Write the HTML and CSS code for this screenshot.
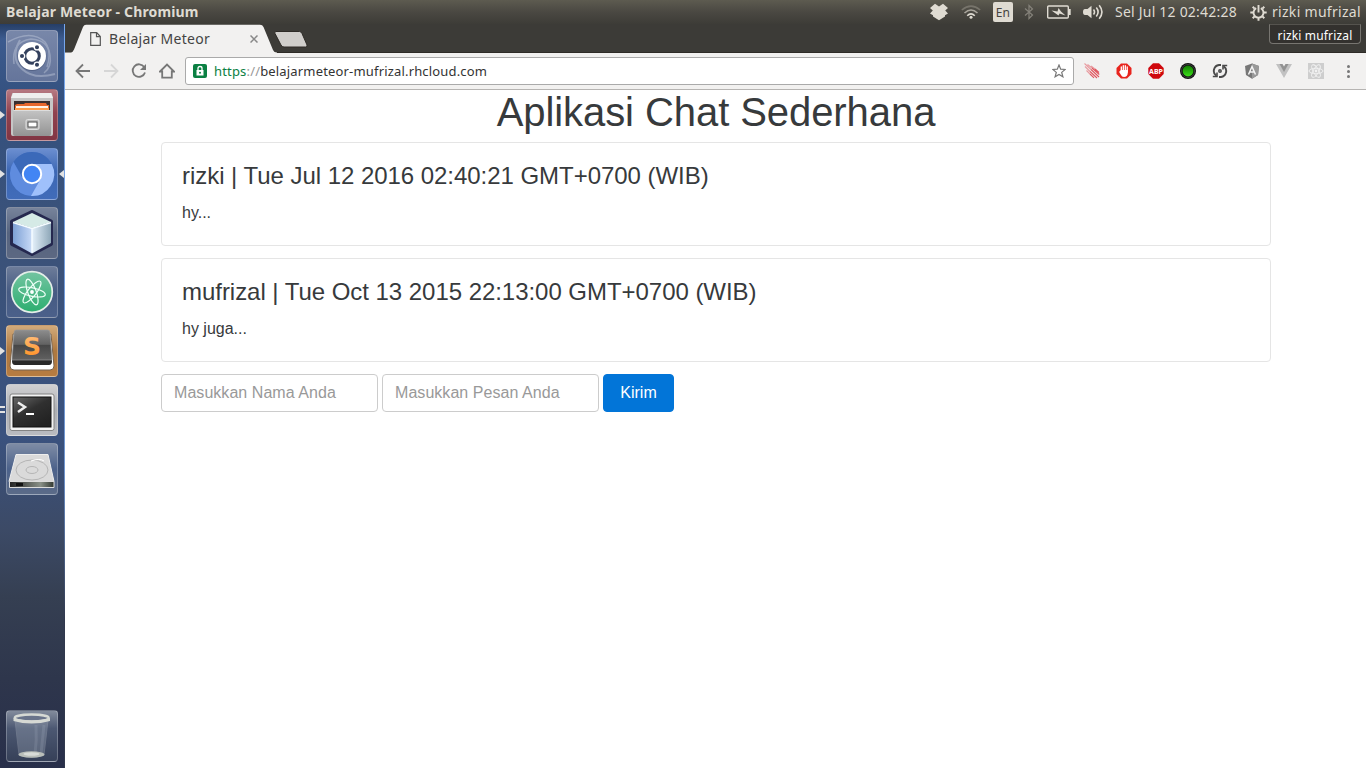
FILE: index.html
```html
<!DOCTYPE html>
<html lang="id">
<head>
<meta charset="utf-8">
<title>Belajar Meteor</title>
<link rel="stylesheet" href="styles.css">
</head>
<body>
<header class="panel">
  <span class="panel-title">Belajar Meteor - Chromium</span>
  <div class="indicators">
    <svg class="ind-dropbox" width="18" height="18" viewBox="0 0 18 18" fill="#dfdbd2"><path d="M5 .8 9 3.500 13 .8 18 5 15.200 7.500 18 10.500 15 12.300V13.600L9 17.200 3 13.600V12.300L0 10.500 2.800 7.500 0 5z"/></svg>
    <svg class="ind-wifi" width="20" height="16" viewBox="0 0 20 16" fill="none" stroke-width="1.5"><path d="M.8 6Q10-1.800 19.200 6" stroke="#77746b"/><path d="M3.500 9Q10 3 16.500 9" stroke="#aaa69d"/><path d="M6.2 11.700Q10 8 13.800 11.700" stroke="#dfdbd2"/><circle cx="10" cy="13.300" r="1.500" fill="#dfdbd2"/></svg>
    <span class="ind-lang">En</span>
    <svg class="ind-bt" width="10" height="16" viewBox="0 0 10 16" fill="none" stroke="#85827a" stroke-width="1.200"><path d="M1 4.500 8.500 11 5 14.500V1.500L8.500 5 1 11.500"/></svg>
    <svg class="ind-battery" width="24" height="14" viewBox="0 0 24 14"><path d="M1.700 1h18.600q1 0 1 1v10q0 1-1 1H1.700q-1 0-1-1V2q0-1 1-1z" fill="none" stroke="#dfdbd2" stroke-width="1.400"/><path d="M22 4h1.700v6H22z" fill="#dfdbd2"/><path d="M4.500 5.500 10.500 6.500 11.500 3 14 6.500 18.500 10.500 12.500 8.500 11.500 10.500z" fill="#dfdbd2"/></svg>
    <svg class="ind-sound" width="21" height="16" viewBox="0 0 21 16" fill="none" stroke="#dfdbd2" stroke-width="1.600"><path d="M0 8q0-3 2-3h2.500L8.500 1.800v12.400L4.500 11H2Q0 11 0 8z" fill="#dfdbd2" stroke="none"/><path d="M10.500 5.500q2 2.500 0 5M13.300 3.500q3.600 4.500 0 9M16.200 1.200q5.500 6.800 0 13.600"/></svg>
    <span class="clock">Sel Jul 12 02:42:28</span>
    <svg class="ind-gear" width="17" height="17" viewBox="0 0 17 17" fill="none" stroke="#dfdbd2"><path d="M8.500 14v2.700M.3 8.500H3M14 8.500h2.700M2.700 2.700 4.600 4.600M12.400 12.400l1.900 1.900M2.700 14.300l1.900-1.900M12.400 4.600l1.900-1.900" stroke-width="2"/><path d="M6.200 4.200a5 5 0 1 0 4.600 0" stroke-width="1.900"/><path d="M8.500 1v7.500" stroke-width="1.900"/></svg>
    <span class="user">rizki mufrizal</span>
  </div>
</header>

<div class="desktop">
  <nav class="launcher">
    <div class="tile dash"><svg viewBox="0 0 52 52"><g fill="none" stroke="#d8dfec" opacity=".35"><path d="M8 34Q5 12 25 9 42 10 44 25 46 37 38 43" stroke-width="1.500"/><path d="M2 12Q25-1 39 12 46 22 41 37" stroke-width="1.500"/><path d="M14 10Q4 28 16 39 28 50 49 44" stroke-width="2"/></g><circle cx="26" cy="26.500" r="14.500" fill="#2c3a5c" opacity=".35"/><circle cx="26" cy="26" r="14" fill="#fff"/><circle cx="26" cy="26" r="7.300" fill="none" stroke="#33405d" stroke-width="3"/><g stroke="#fff" stroke-width="1.300" fill="#33405d"><circle cx="16" cy="26" r="2.700"/><circle cx="31" cy="17.200" r="2.700"/><circle cx="31" cy="34.800" r="2.700"/></g></svg></div>
    <div class="tile files"><i class="arrow-left"></i><svg viewBox="0 0 52 52"><defs><linearGradient id="cab" x2="0" y2="1"><stop stop-color="#c4c4c4"/><stop offset="1" stop-color="#939393"/></linearGradient></defs><path d="M5 9 6 5q0-1 1-1h38q1 0 1 1l1 4v36q0 2-2 2H7q-2 0-2-2z" fill="#c6c6c6"/><path d="M7 4h38l2 5H5z" fill="#efefef"/><path d="M8 12h36v12H8z" fill="#3a3030"/><path d="M9 21v-5l2-1h7l1-1h21l1 2h2v5z" fill="#e7672d"/><path d="M10 17h32v2H10z" fill="#fff3e8"/><path d="M9 19h34v3H9z" fill="#ff9d4c"/><path d="M7 21h38v24q0 2-2 2H9q-2 0-2-2z" fill="url(#cab)"/><path d="M7.500 21.500h37" stroke="#ddd"/><rect x="20" y="30.500" width="13" height="10" rx="1.500" fill="#bbb" stroke="#e0e0e0"/><rect x="22" y="33" width="9" height="5" fill="#fff" stroke="#505050"/></svg></div>
    <div class="tile chromium"><i class="arrow-left"></i><i class="arrow-right"></i><svg viewBox="0 0 52 52"><circle cx="26" cy="26" r="22" fill="#4373cc"/><path d="M7.500 14A22 22 0 0 1 44.500 14L46 16.500H26L16.500 29z" fill="#3b69b9"/><path d="M7.500 14A22 22 0 0 0 26 48L34 31H17z" fill="#5f8cdf"/><path d="M26 16h19.700A22 22 0 0 1 25 48L34.500 31Z" fill="#9fc0fb"/><circle cx="26" cy="26" r="9.200" fill="#4285f4" stroke="#fff" stroke-width="2"/></svg></div>
    <div class="tile netbeans"><svg viewBox="0 0 52 52"><defs><linearGradient id="cl"><stop stop-color="#7da0d5"/><stop offset="1" stop-color="#c8daf6"/></linearGradient><linearGradient id="cr"><stop stop-color="#e5f1fb"/><stop offset="1" stop-color="#8ea7b8"/></linearGradient></defs><path d="M26 5 45 14.500V37L26 47 6 37V14.500z" fill="#243057" stroke="#25284f" stroke-width="4" stroke-linejoin="round"/><path d="M26 6 45 15 26 21 7 15z" fill="#d5eae6"/><path d="M7 15.500 26 21V46.500L7 36z" fill="url(#cl)"/><path d="M26 21 45 15.500V36L26 46.500z" fill="url(#cr)"/><path d="M7 15.500l19 6 19-6M26 21v24.500" fill="none" stroke="#f5fcff" stroke-width="1.500"/></svg></div>
    <div class="tile atom"><svg viewBox="0 0 52 52"><defs><linearGradient id="at" x2="0" y2="1"><stop stop-color="#73c4a1"/><stop offset="1" stop-color="#2dae70"/></linearGradient></defs><circle cx="26" cy="26" r="20.300" fill="url(#at)" stroke="#e4eee9" stroke-width="1.700"/><g fill="none" stroke="#eefff7" stroke-width="1.200"><ellipse cx="26" cy="26" rx="13.500" ry="4.200" transform="rotate(12 26 26)"/><ellipse cx="26" cy="26" rx="13.500" ry="4.200" transform="rotate(70 26 26)"/><ellipse cx="26" cy="26" rx="13.500" ry="4.200" transform="rotate(128 26 26)"/></g><circle cx="26" cy="26" r="1.900" fill="#fff"/></svg></div>
    <div class="tile sublime"><i class="arrow-left"></i><svg viewBox="0 0 52 52"><defs><linearGradient id="sub" x2="0" y2="1"><stop stop-color="#8d8d8d"/><stop offset=".48" stop-color="#626262"/><stop offset=".5" stop-color="#464646"/><stop offset="1" stop-color="#616161"/></linearGradient><linearGradient id="letter" x2="0" y2="1"><stop stop-color="#ffc384"/><stop offset="1" stop-color="#ff8a18"/></linearGradient></defs><path d="M7 9 4 41q0 4 4 4h36q4 0 4-4L45 9z" fill="#fff" stroke="#77634e"/><path d="M8 8 6 36q0 4 3 4h34q3 0 3-4L44 8z" fill="#292929"/><path d="M10 5h32q2 0 2 3l2 27H6L8 8q0-3 2-3z" fill="url(#sub)" stroke="#999" stroke-width=".7"/><text x="26" y="30" text-anchor="middle" class="sublime-letter" fill="url(#letter)">S</text></svg></div>
    <div class="tile terminal"><i class="double-mark"></i><svg viewBox="0 0 52 52"><defs><linearGradient id="term" x2=".7" y2="1"><stop stop-color="#686868"/><stop offset=".5" stop-color="#303030"/><stop offset="1" stop-color="#222"/></linearGradient></defs><rect x="4" y="10" width="44" height="36.500" rx="2" fill="#f3f3f3" stroke="#838383"/><rect x="7" y="13" width="38" height="30" fill="url(#term)" stroke="#111"/><path d="M12 18.500 19 23 12 28" fill="none" stroke="#eee" stroke-width="2.500"/><path d="M20 30h8" stroke="#fff" stroke-width="2"/></svg></div>
    <div class="tile disk"><svg viewBox="0 0 52 52"><defs><linearGradient id="edge"><stop stop-color="#222"/><stop offset=".7" stop-color="#899087"/><stop offset="1" stop-color="#303730"/></linearGradient></defs><path d="M10 11.500h32l6 27H3z" fill="#dadada" stroke="#eee"/><path d="M3.500 38.500h44.500v6H3.500z" fill="url(#edge)" stroke="#ddd"/><g fill="none" stroke="#b5b5b5"><ellipse cx="26" cy="27" rx="16" ry="10"/><ellipse cx="26" cy="27" rx="6" ry="3.500"/></g><path d="M25 18Q34 15 38 18" fill="none" stroke="#fff"/><path d="M10 40h7v3h-7z" fill="#111"/></svg></div>
    <div class="tile trash"><svg viewBox="0 0 52 52"><path d="M9 10 13 45q12 5 25 0l4-35z" fill="#aeb8c5" opacity=".28" stroke="#c6ccd4"/><path d="M30 15q1 15-1 29M38 15l-3 29" stroke="#c8d0da" opacity=".14" stroke-width="3" fill="none"/><ellipse cx="25.500" cy="44.500" rx="13" ry="3.200" fill="#b9beb9"/><ellipse cx="25.500" cy="44" rx="8" ry="1.800" fill="#d9dcd8"/><ellipse cx="25.700" cy="8" rx="17" ry="3.500" fill="#69738a" stroke="#d6d9d4" stroke-width="2.300"/><path d="M7.500 8v3q18 5 36.500 0V8q-18 5-36.500 0z" fill="#d6d9d4"/></svg></div>
  </nav>

  <section class="browser">
    <div class="tab-strip">
      <svg class="tab-shape" width="250" height="30" viewBox="0 0 250 30"><path d="M0 28.500H6Q8 28 9 25.500L18 3Q19 .8 21 .8H195Q197.500 .8 198.500 3L208 26Q209 28.500 212 28.500V30H0z" fill="#f2f1f0"/><path d="M211 7.500H234.500Q236 7.500 237 9.500L242 21Q242.600 23 240.500 23H219Q217 23 216 21L210 9.500Q209 7.500 211 7.500z" fill="#d0cecb" stroke="#2e2b27"/></svg>
      <div class="tab"><svg width="11" height="14" viewBox="0 0 11 14"><path d="M.7.700h6L10.300 4.500v8.800H.7zM6.500.700v4h3.800" fill="none" stroke="#555" stroke-width="1.200"/></svg><span class="tab-name">Belajar Meteor</span><svg class="tab-close" width="8" height="8" viewBox="0 0 8 8"><path d="M.5.500 7.500 7.500M7.500.500.500 7.500" stroke="#888" stroke-width="1.500"/></svg></div>
      <span class="profile">rizki mufrizal</span>
    </div>
    <div class="toolbar">
      <div class="nav-icons">
        <svg viewBox="0 0 16 16"><path d="M15 8H2M8 1.500 1.500 8 8 14.500" stroke="#777" stroke-width="1.800" fill="none"/></svg>
        <svg viewBox="0 0 16 16"><path d="M1 8h13M8 1.500 14.500 8 8 14.500" stroke="#d6d6d6" stroke-width="1.800" fill="none"/></svg>
        <svg viewBox="0 0 16 16"><path d="M13.200 4A6.300 6.300 0 1 0 14 9.500" stroke="#777" stroke-width="1.800" fill="none"/><path d="M15 1v6H9z" fill="#777"/></svg>
        <svg viewBox="0 0 16 16"><path d="M1 8.500 8 1.500 15 8.500H12.800V14.700H3.200V8.500z" stroke="#777" stroke-width="1.800" fill="none"/></svg>
      </div>
      <div class="address">
        <svg class="lock" width="14" height="14" viewBox="0 0 14 14"><rect width="14" height="14" rx="2" fill="#0b8043"/><path d="M3.500 6h7v5.500h-7z" fill="#fff"/><path d="M5 6V4.200q0-1.700 2-1.700t2 1.700V6" fill="none" stroke="#fff" stroke-width="1.300"/><circle cx="7" cy="8.700" r="1" fill="#0b8043"/></svg>
        <span class="url"><span class="scheme">https</span><span class="slashes">://</span>belajarmeteor-mufrizal.rhcloud.com</span>
        <svg class="star" width="14" height="14" viewBox="0 0 14 14"><path d="M7 1 8.700 5.200 13.200 5.500 9.700 8.400 10.900 12.800 7 10.400 3.100 12.800 4.300 8.400.8 5.500 5.300 5.200z" fill="none" stroke="#777" stroke-width="1.200"/></svg>
      </div>
      <div class="extensions">
        <svg viewBox="0 0 16 16" fill="none" stroke="#e0565e" stroke-width="1.100"><path d="M.5.500 7 6.500M3.500 1.500 8 5M1 3.500 6 8.500M7 3l4 3M2.500 7.500 6 11" opacity=".55"/><path d="M7 6.500 15 14M8 5 15.300 11.500M6 8.500 13 15M11 6l4 3.500M6 11l4 3.800"/></svg>
        <svg viewBox="0 0 16 16"><path d="M5 .500h6L15.500 5v6L11 15.500H5L.5 11V5z" fill="#e8241d"/><path d="M5.300 9V4M7.300 8V2.700M9.300 8V2.700M11.200 9V4" stroke="#fff" stroke-width="1.300" stroke-linecap="round"/><path d="M4.700 7h7.100v3q-.3 4-3.800 4-2.200 0-3.300-2.500L3 8.800 4.200 8z" fill="#fff"/></svg>
        <svg viewBox="0 0 16 16"><path d="M5 .300h6L15.700 5v6L11 15.700H5L.3 11V5z" fill="#cf080d"/><text x="8" y="10.600" class="abp">ABP</text></svg>
        <svg viewBox="0 0 16 16"><defs><linearGradient id="gr" x2="0" y2="1"><stop stop-color="#147e03"/><stop offset="1" stop-color="#3bdf18"/></linearGradient></defs><circle cx="8" cy="8" r="8" fill="#111"/><circle cx="8" cy="8" r="6.600" fill="none" stroke="#555" stroke-width=".6"/><circle cx="8" cy="8" r="5.400" fill="url(#gr)"/></svg>
        <svg viewBox="0 0 16 16" fill="none" stroke="#4a4a4a" stroke-width="1.900"><path d="M9 2H7A6 6 0 0 0 4.300 12.800M7 14h2A6 6 0 0 0 11.700 3.200"/><path d="M.8 13.500H5V9.500M15.200 2.500H11V6.500" stroke-width="1.600"/><circle cx="8" cy="8" r="1.200" stroke-width="1.500"/></svg>
        <svg viewBox="0 0 16 16"><path d="M8 .500 15 3 14 12 8 15.700 2 12 1 3z" fill="#777"/><path d="M8 .500 15 3 14 12 8 15.700z" fill="#999"/><path d="M4.500 11.500 8 3.500 11.500 11.500M6 9h4" fill="none" stroke="#f4f4f4" stroke-width="1.500"/></svg>
        <svg viewBox="0 0 16 16"><path d="M0 1h4l4 7 4-7h4L8 15z" fill="#c2c2c2"/><path d="M3.500 1h3L8 3.500 9.500 1h3L8 9z" fill="#929292"/></svg>
        <svg viewBox="0 0 16 16"><path d="M0 0h16v16H0z" fill="#cecece"/><g fill="none" stroke="#f2f2f2" stroke-width=".9"><ellipse cx="8" cy="8" rx="7" ry="2.700"/><ellipse cx="8" cy="8" rx="7" ry="2.700" transform="rotate(60 8 8)"/><ellipse cx="8" cy="8" rx="7" ry="2.700" transform="rotate(120 8 8)"/></g><circle cx="8" cy="8" r="1.400" fill="#f2f2f2"/></svg>
        <svg viewBox="0 0 16 16" fill="#777"><circle cx="8.500" cy="3.500" r="1.500"/><circle cx="8.500" cy="8.500" r="1.500"/><circle cx="8.500" cy="13.500" r="1.500"/></svg>
      </div>
    </div>
    <main class="page">
      <div class="container">
        <h1>Aplikasi Chat Sederhana</h1>
        <article class="card"><h4>rizki | Tue Jul 12 2016 02:40:21 GMT+0700 (WIB)</h4><p>hy...</p></article>
        <article class="card"><h4>mufrizal | Tue Oct 13 2015 22:13:00 GMT+0700 (WIB)</h4><p>hy juga...</p></article>
        <form class="chat-form"><input type="text" placeholder="Masukkan Nama Anda"><input type="text" placeholder="Masukkan Pesan Anda"><button type="button">Kirim</button></form>
      </div>
    </main>
  </section>
</div>
</body>
</html>
```

FILE: styles.css
```css
* { box-sizing: border-box; }
body { margin: 0; width: 1366px; height: 768px; overflow: hidden; font-family: "Noto Sans", sans-serif; background: #fff; }
svg { display: block; flex: none; }

.panel { height: 24px; display: flex; justify-content: space-between; align-items: center; padding: 0 5px 0 6px; color: #dfdbd2; background: linear-gradient(#5d5b50, #4a4842 50%, #3d3c37); font-size: 14px; line-height: 24px; white-space: nowrap; }
.panel-title { font-weight: bold; letter-spacing: .15px; }
.indicators { display: flex; align-items: center; height: 24px; }
.ind-wifi { margin-left: 13px; }
.ind-lang { width: 20px; height: 20px; margin-left: 12px; border-radius: 2px; background: #dfdbd2; color: #45433e; font-size: 12px; line-height: 21px; text-align: center; letter-spacing: .3px; }
.ind-bt { margin-left: 11px; }
.ind-battery { margin-left: 13px; }
.ind-sound { margin-left: 12px; }
.clock { width: 122px; margin-left: 11px; letter-spacing: .22px; }
.ind-gear { margin-left: 13px; }
.user { width: 89px; margin-left: 5px; letter-spacing: .3px; }

.desktop { display: flex; height: 744px; }
.launcher { width: 65px; display: flex; flex-direction: column; gap: 7px; padding: 6px 0 6px 6px; border-right: 1px solid #6b91cd; border-image: linear-gradient(#77a7ed, #7096d0 60%, #30384d 80%) 1; background: linear-gradient(#263e66, #3c5b8f 2%, #34517f 10%, #3b5279 30%, #3a527f 55%, #3c4a66 68%, #353f52 77%, #2e364c 88%, #282f4a); }
.tile { position: relative; width: 52px; height: 52px; flex: none; border-radius: 4px; border: 1px solid rgba(255,255,255,.25); background: linear-gradient(#7180a0, #60708f 50%, #536384); }
.tile svg { width: 52px; height: 52px; margin: -1px; }
.dash { background: linear-gradient(#7887a9, #65759b); }
.files { background: linear-gradient(#b67982, #90424f 45%, #813543); }
.chromium { background: linear-gradient(#6b8ed0, #3c67b4 45%, #416cb9); }
.netbeans { background: linear-gradient(#77839b, #56647f 50%, #5c6882); }
.atom { background: linear-gradient(#6d7c99, #465b83 50%, #4b608a); }
.sublime { background: linear-gradient(#d2aa7a, #ae7840 50%, #b67c41); }
.terminal { background: linear-gradient(#d0d0d2, #adafb3 50%, #b9bbc0); }
.disk { background: linear-gradient(#7e8ca5, #4c628b 50%, #5b6b88); }
.trash { margin-top: auto; background: linear-gradient(#828b9c, #4c5872 35%, #364058); }
.sublime-letter { font: bold 25px "DejaVu Sans", sans-serif; }
.arrow-left, .arrow-right { position: absolute; top: 21px; border: 4px solid transparent; }
.arrow-left { left: -7px; border-left: 5px solid #e2e2e2; border-right: 0; }
.arrow-right { right: -7px; border-right: 5px solid #e2e2e2; border-left: 0; }
.double-mark { position: absolute; left: -7px; top: 21px; width: 5px; height: 7px; border-top: 2px solid #e2e2e2; border-bottom: 2px solid #e2e2e2; }

.browser { width: 1301px; background: #fff; }
.tab-strip { position: relative; height: 29px; background: #3c3b37; border-bottom: 1px solid #2e2b27; display: flex; justify-content: space-between; }
.tab-shape { position: absolute; left: 0; top: 0; }
.tab { position: relative; display: flex; align-items: center; width: 194px; height: 29px; margin-left: 25px; }
.tab-name { flex: 1; margin-left: 8px; font-size: 14px; line-height: 29px; color: #444; letter-spacing: .28px; }
.tab-close { margin-right: 1px; }
.tab { width: 169px; }
.profile { width: 92px; height: 20px; margin-right: 5px; border: 1px solid #777570; border-top-color: #55534e; border-radius: 0 0 4px 4px; background: #33312e; color: #fff; font-size: 12px; line-height: 21px; letter-spacing: .17px; text-align: center; }
.toolbar { height: 37px; background: #f2f1f0; border-bottom: 1px solid #b6b4b2; display: flex; align-items: center; }
.nav-icons { display: flex; gap: 12px; width: 110px; margin-left: 10px; }
.nav-icons svg { width: 16px; height: 16px; }
.address { width: 889px; height: 28px; display: flex; align-items: center; padding: 0 7px; border: 1px solid #aaa; border-radius: 3px; background: #fff; }
.url { margin-left: 7px; flex: 1; font-size: 13px; line-height: 26px; color: #333; letter-spacing: .17px; white-space: nowrap; }
.scheme { color: #0b8043; }
.slashes { color: #999; }
.extensions { display: flex; gap: 16px; margin-left: 10px; }
.extensions svg { width: 16px; height: 16px; }
.abp { font: bold 7px "Noto Sans", sans-serif; fill: #fff; text-anchor: middle; }

.page { padding: 0 96px; font-family: "Liberation Sans", Arial, sans-serif; color: #373a3c; font-size: 16px; line-height: 24px; }
.container { width: 1110px; }
h1 { margin: 0 0 8px; font-size: 40px; line-height: 44px; text-align: center; letter-spacing: -.07px; }
h1, h4 { font-weight: normal; }
.card { height: 104px; padding: 20px; border: 1px solid #e5e5e5; border-radius: 4px; margin-bottom: 12px; }
h4 { margin: 0 0 12px; font-size: 24px; line-height: 26px; letter-spacing: -.04px; }
p { margin: 0; }
.chat-form { display: flex; gap: 4px; }
.chat-form input { width: 217px; height: 38px; padding: 6px 12px; border: 1px solid #ccc; border-radius: 4px; font: 16px/24px "Liberation Sans", Arial, sans-serif; letter-spacing: .05px; }
.chat-form input::placeholder { color: #999; opacity: 1; }
.chat-form button { width: 71px; height: 38px; border: 1px solid #0275d8; border-radius: 4px; background: #0275d8; color: #fff; font: 16px/24px "Liberation Sans", Arial, sans-serif; padding: 6px 0; }
```
